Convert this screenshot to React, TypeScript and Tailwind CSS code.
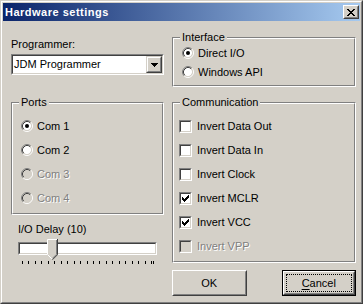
import React from "react";

// classic 3D edges
const sunkenOuter = "border border-t-[#808080] border-l-[#808080] border-r-white border-b-white";
const sunkenInner = "border border-t-[#404040] border-l-[#404040] border-r-[#d4d0c8] border-b-[#d4d0c8]";
const raisedOuter = "border border-t-white border-l-white border-r-[#404040] border-b-[#404040]";
const raisedInner = "border border-t-[#d4d0c8] border-l-[#d4d0c8] border-r-[#808080] border-b-[#808080]";
const frameOuter = "border border-t-[#d4d0c8] border-l-[#d4d0c8] border-r-[#404040] border-b-[#404040]";
const frameInner = "border border-t-white border-l-white border-r-[#808080] border-b-[#808080]";
const disabledText = "text-[#808080] [text-shadow:1px_1px_0_#ffffff]";

function GroupBox({ label, children }: { label: string; children: React.ReactNode }) {
    return (
        <div className="relative border border-t-[#808080] border-l-[#808080] border-r-white border-b-white">
            <div className="border border-t-white border-l-white border-r-[#808080] border-b-[#808080]">{children}</div>
            <span className="absolute -top-[7px] left-[7px] bg-[#d4d0c8] px-[2px]">{label}</span>
        </div>
    );
}

function RadioGlyph({ checked, disabled }: { checked?: boolean; disabled?: boolean }) {
    return (
        <svg width="12" height="12" viewBox="0 0 12 12" className="shrink-0">
            <circle cx="6" cy="6" r="4.2" fill={disabled ? "#d4d0c8" : "#ffffff"} />
            <g fill="none" strokeWidth="1">
                <path d="M2.11 9.89 A5.5 5.5 0 0 1 9.89 2.11" stroke="#808080" />
                <path d="M9.89 2.11 A5.5 5.5 0 0 1 2.11 9.89" stroke="#ffffff" />
                <path d="M2.82 9.18 A4.5 4.5 0 0 1 9.18 2.82" stroke="#404040" />
                <path d="M9.18 2.82 A4.5 4.5 0 0 1 2.82 9.18" stroke="#d4d0c8" />
            </g>
            {checked && <circle cx="6" cy="6" r="2" fill="#000000" />}
        </svg>
    );
}

function Radio({ label, checked, disabled }: { label: string; checked?: boolean; disabled?: boolean }) {
    return (
        <div className="flex h-[16px] items-center gap-[4px]">
            <RadioGlyph checked={checked} disabled={disabled} />
            <span className={disabled ? disabledText : ""}>{label}</span>
        </div>
    );
}

function Check({ label, checked, disabled }: { label: string; checked?: boolean; disabled?: boolean }) {
    return (
        <div className="flex h-[16px] items-center gap-[5px]">
            <div className={`h-[13px] w-[13px] shrink-0 ${sunkenOuter}`}>
                <div
                    className={`flex h-full w-full items-center justify-center ${sunkenInner} ${
                        disabled ? "bg-[#d4d0c8]" : "bg-white"
                    }`}
                >
                    {checked && (
                        <svg width="7" height="7" viewBox="0 0 7 7" shapeRendering="crispEdges">
                            <path
                                d="M0 2h1v3H0zM1 3h1v3H1zM2 4h1v3H2zM3 3h1v3H3zM4 2h1v3H4zM5 1h1v3H5zM6 0h1v3H6z"
                                fill="#000000"
                            />
                        </svg>
                    )}
                </div>
            </div>
            <span className={disabled ? disabledText : ""}>{label}</span>
        </div>
    );
}

function ComboBox({ value }: { value: string }) {
    return (
        <div className={`mt-[3px] h-[21px] w-[153px] ${sunkenOuter}`}>
            <div className={`flex h-full items-center bg-white ${sunkenInner}`}>
                <span className="flex-1 pl-[1px]">{value}</span>
                <div className={`h-[17px] w-[16px] ${frameOuter}`}>
                    <div className={`flex h-full items-center justify-center bg-[#d4d0c8] ${frameInner}`}>
                        <svg width="7" height="4" viewBox="0 0 7 4" shapeRendering="crispEdges">
                            <path d="M0 0h7v1H0zM1 1h5v1H1zM2 2h3v1H2zM3 3h1v1H3z" fill="#000000" />
                        </svg>
                    </div>
                </div>
            </div>
        </div>
    );
}

function Slider() {
    const ticks = Array.from({ length: 21 }, (_, i) => Math.round(4 + i * 6.45));
    ticks.push(135);
    return (
        <div className="relative ml-[7px] mt-[3px] w-[139px]">
            <div className="pt-[3px]">
                <div className={`h-[13px] ${sunkenOuter}`}>
                    <div className={`h-full bg-white ${sunkenInner}`} />
                </div>
            </div>
            <svg className="mt-[6px]" width="139" height="3" shapeRendering="crispEdges">
                {ticks.map((x, i) => (
                    <rect key={i} x={x} y="0" width="1" height="3" fill="#000000" />
                ))}
            </svg>
            {/* thumb sits over the track */}
            <svg className="absolute left-[29px] top-0" width="11" height="21" viewBox="0 0 11 21">
                <path d="M0 0H11V15.5L5.5 21L0 15.5Z" fill="#d4d0c8" />
                <g fill="none" strokeWidth="1">
                    <path d="M0.5 15.5V0.5H10" stroke="#ffffff" />
                    <path d="M0.5 15.5L5 20" stroke="#ffffff" />
                    <path d="M10.5 0V15.7L5.5 20.7" stroke="#404040" />
                    <path d="M9.5 1V15.3L5.5 19.3" stroke="#808080" />
                </g>
            </svg>
        </div>
    );
}

function PushButton({ children, isDefault }: { children: React.ReactNode; isDefault?: boolean }) {
    if (isDefault) {
        return (
            <div className="h-[26px] w-[75px] border border-black">
                <div className={`h-full ${raisedOuter}`}>
                    <div className={`h-full p-[1px] ${raisedInner}`}>
                        <div className="flex h-full items-center justify-center border border-dotted border-black">
                            {children}
                        </div>
                    </div>
                </div>
            </div>
        );
    }
    return (
        <div className={`h-[26px] w-[75px] ${raisedOuter}`}>
            <div className={`flex h-full items-center justify-center ${raisedInner}`}>{children}</div>
        </div>
    );
}

export default function App() {
    return (
        <div
            className={`h-[304px] w-[363px] font-['Liberation_Sans',Arial,sans-serif] text-[11px] leading-[13px] text-black ${frameOuter}`}
        >
            <div className={`flex h-full flex-col bg-[#d4d0c8] p-[1px] ${frameInner}`}>
                {/* Title bar */}
                <div className="flex h-[18px] items-center justify-between bg-linear-to-r/srgb from-[#0a246a] to-[#a6caf0] pl-[2px] pr-[1px]">
                    <span className="text-[11px] font-bold tracking-[0.5px] text-white">Hardware settings</span>
                    <div className={`h-[14px] w-[16px] ${raisedOuter}`}>
                        <div className={`flex h-full items-center justify-center bg-[#d4d0c8] pt-[1px] ${raisedInner}`}>
                            <svg width="8" height="7" viewBox="0 0 8 7" shapeRendering="crispEdges">
                                <path
                                    d="M0 0h2v1H0zM6 0h2v1H6zM1 1h2v1H1zM5 1h2v1H5zM2 2h4v1H2zM3 3h2v1H3zM2 4h4v1H2zM1 5h2v1H1zM5 5h2v1H5zM0 6h2v1H0zM6 6h2v1H6z"
                                    fill="#000000"
                                />
                            </svg>
                        </div>
                    </div>
                </div>

                {/* Body */}
                <div className="flex gap-[8px] pl-[8px] pt-[16px]">
                    {/* Left column */}
                    <div className="flex w-[153px] flex-col">
                        <div className="mt-[1px]">Programmer:</div>
                        <ComboBox value="JDM Programmer" />
                        <div className="mt-[27px]">
                            <GroupBox label="Ports">
                                <div className="flex flex-col gap-[8px] pb-[7px] pl-[8px] pt-[14px]">
                                    <Radio label="Com 1" checked />
                                    <Radio label="Com 2" />
                                    <Radio label="Com 3" disabled />
                                    <Radio label="Com 4" disabled />
                                </div>
                            </GroupBox>
                        </div>
                        <div className="mt-[8px] pl-[7px]">I/O Delay (10)</div>
                        <Slider />
                    </div>

                    {/* Right column */}
                    <div className="flex w-[184px] flex-col">
                        <GroupBox label="Interface">
                            <div className="flex flex-col gap-[3px] pb-[5px] pl-[8px] pt-[6px]">
                                <Radio label="Direct I/O" checked />
                                <Radio label="Windows API" />
                            </div>
                        </GroupBox>
                        <div className="mt-[15px]">
                            <GroupBox label="Communication">
                                <div className="flex flex-col gap-[8px] pb-[7px] pl-[5px] pt-[14px]">
                                    <Check label="Invert Data Out" />
                                    <Check label="Invert Data In" />
                                    <Check label="Invert Clock" />
                                    <Check label="Invert MCLR" checked />
                                    <Check label="Invert VCC" checked />
                                    <Check label="Invert VPP" disabled />
                                </div>
                            </GroupBox>
                        </div>
                        <div className="mt-[7px] flex gap-[35px]">
                            <PushButton>OK</PushButton>
                            <PushButton isDefault>
                                <span>
                                    <span className="underline underline-offset-[2px]">C</span>ancel
                                </span>
                            </PushButton>
                        </div>
                    </div>
                </div>
            </div>
        </div>
    );
}
